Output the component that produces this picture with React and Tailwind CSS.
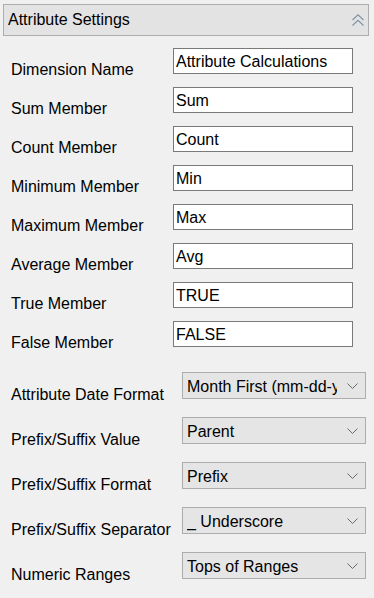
import React from "react"

const textFields = [
  { label: "Dimension Name", value: "Attribute Calculations" },
  { label: "Sum Member", value: "Sum" },
  { label: "Count Member", value: "Count" },
  { label: "Minimum Member", value: "Min" },
  { label: "Maximum Member", value: "Max" },
  { label: "Average Member", value: "Avg" },
  { label: "True Member", value: "TRUE" },
  { label: "False Member", value: "FALSE" },
]

const selectFields = [
  { label: "Attribute Date Format", value: "Month First (mm-dd-yyyy)" },
  { label: "Prefix/Suffix Value", value: "Parent" },
  { label: "Prefix/Suffix Format", value: "Prefix" },
  { label: "Prefix/Suffix Separator", value: "_ Underscore" },
  { label: "Numeric Ranges", value: "Tops of Ranges" },
]

const ChevronDown = () => (
  <svg width="11" height="6" viewBox="0 0 11 6" fill="none" className="shrink-0">
    <path d="M0.5 0.5 L5.5 5.5 L10.5 0.5" stroke="#6a6a6a" strokeWidth="1" />
  </svg>
)

const DoubleChevronUp = () => (
  <svg width="12" height="12" viewBox="0 0 12 12" fill="none" className="shrink-0">
    <path d="M0.5 6 L6 0.8 L11.5 6" stroke="#7f91a5" strokeWidth="1.1" />
    <path d="M0.5 11.5 L6 6.3 L11.5 11.5" stroke="#7f91a5" strokeWidth="1.1" />
  </svg>
)

const TextRow = ({ label, value }) => (
  <div className="flex h-[26px] items-start">
    <div className="w-[162px] pt-[13px] leading-[18px] whitespace-nowrap">{label}</div>
    <div className="w-[180px] h-[26px] border border-[#7a7a7a] bg-white pl-[2px] pt-[2px] leading-[22px] whitespace-nowrap overflow-hidden">
      {value}
    </div>
  </div>
)

const SelectRow = ({ label, value }) => (
  <div className="flex h-[27px] items-start">
    <div className="w-[171px] pt-[14px] leading-[18px] whitespace-nowrap">{label}</div>
    <div className="w-[184px] h-[27px] border border-[#adadad] bg-[#e5e5e5] flex items-center justify-between pl-[4px] pr-[7px]">
      <div className="w-[150px] self-start pt-[5px] leading-[18px] whitespace-nowrap overflow-hidden">
        {value}
      </div>
      <ChevronDown />
    </div>
  </div>
)

export default function App() {
  return (
    <div className="w-[374px] h-[598px] bg-[#f0f0f0] overflow-hidden text-[16px] text-black font-['Liberation_Sans',Arial,sans-serif]">
      <div className="ml-[3px] mt-[4px] w-[366px] h-[32px] border border-[#adadad] bg-[#e3e3e3] flex items-center justify-between pl-[4px] pr-[4px]">
        <span className="leading-[18px]">Attribute Settings</span>
        <DoubleChevronUp />
      </div>

      <div className="pl-[11px] pt-[12px] flex flex-col gap-[13px]">
        {textFields.map((f) => (
          <TextRow key={f.label} label={f.label} value={f.value} />
        ))}
      </div>

      <div className="pl-[11px] pt-[25px] flex flex-col gap-[18px]">
        {selectFields.map((f) => (
          <SelectRow key={f.label} label={f.label} value={f.value} />
        ))}
      </div>
    </div>
  )
}
